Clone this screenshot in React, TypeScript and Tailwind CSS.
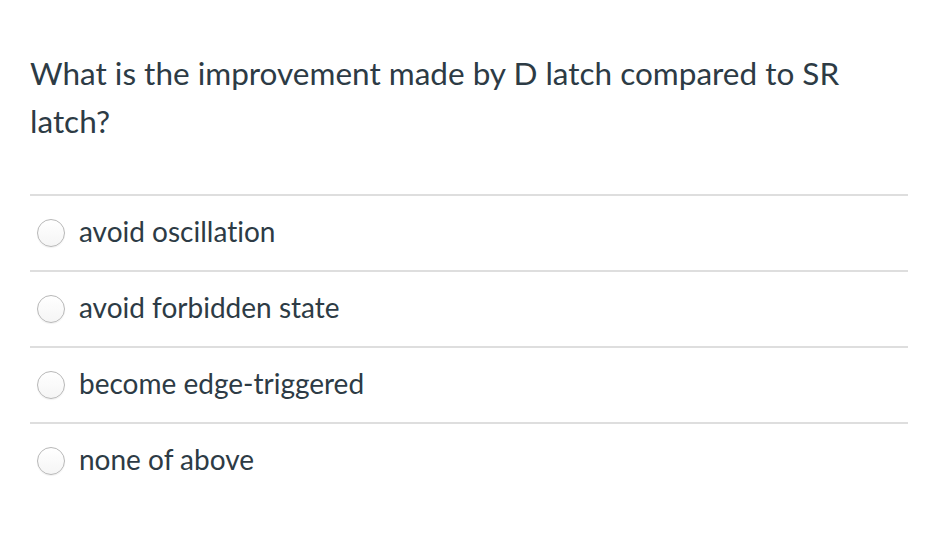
const options = [
  "avoid oscillation",
  "avoid forbidden state",
  "become edge-triggered",
  "none of above",
];

function Radio() {
  return (
    <span className="block h-[28px] w-[28px] shrink-0 rounded-full border border-[#b8b8b8] bg-gradient-to-b from-white to-[#f5f5f5] shadow-[0_1px_1px_rgba(0,0,0,0.06)]" />
  );
}

export default function App() {
  return (
    <div className="min-h-[534px] w-[940px] bg-white pl-[30px] pr-[32px] pt-[49px] font-['Lato',sans-serif] text-[#2d3b45] [font-variant-ligatures:none]">
      <p className="text-[31.5px] leading-[48px]">
        What is the improvement made by D latch compared to SR latch?
      </p>
      <div className="mt-[49px]">
        {options.map((opt) => (
          <div
            key={opt}
            className="flex h-[76px] items-center gap-[14px] border-t-2 border-[#dedede] pl-[7px]"
          >
            <Radio />
            <span className="mb-[5px] text-[28px]">{opt}</span>
          </div>
        ))}
      </div>
    </div>
  );
}
